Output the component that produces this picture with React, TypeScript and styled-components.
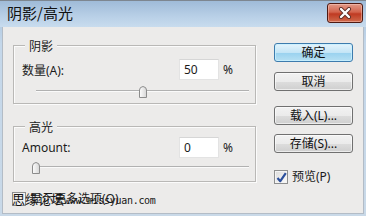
import styled, { createGlobalStyle } from "styled-components";

const GlobalStyle = createGlobalStyle`
  html, body {
    margin: 0;
    padding: 0;
    width: 366px;
    height: 216px;
    overflow: hidden;
    background: #ecebea;
  }
  * {
    box-sizing: border-box;
  }
`;

const FONT = `"Noto Sans", "Noto Sans CJK SC", sans-serif`;

const Window = styled.div`
  width: 366px;
  height: 216px;
  display: flex;
  flex-direction: column;
  background: linear-gradient(#a3bfdb, #c4d7ea 20%, #c9d9e8);
  border-top: 1px solid #7d8690;
  font-family: ${FONT};
  color: #1b1b1b;
`;

const TitleBar = styled.div`
  height: 26px;
  flex: none;
  display: flex;
  align-items: center;
  justify-content: space-between;
  padding: 0 3px 0 7px;
  background: linear-gradient(#9fbbd8, #b9d0e7 60%, #c8dcee);
`;

const Title = styled.span`
  font-size: 15px;
  line-height: 18px;
  font-family: "Noto Sans CJK SC", sans-serif;
  color: #111;
  margin-top: -2px;
`;

const CloseButton = styled.div`
  width: 36px;
  height: 20px;
  margin-top: -3px;
  border: 1px solid #4e1a12;
  border-radius: 3px;
  background: linear-gradient(#e19a88, #d3644d 45%, #bf3a22 55%, #cf6a4c);
  display: flex;
  align-items: center;
  justify-content: center;
  box-shadow: inset 0 0 0 1px rgba(255, 210, 200, 0.45);
`;

const Body = styled.div`
  flex: 1;
  display: flex;
  margin: 0 2px 2px 2px;
  background: #ecebea;
  border-left: 1px solid #b3bcc6;
  border-right: 1px solid #b3bcc6;
  border-bottom: 1px solid #b3bcc6;
  padding: 0 0 0 10px;
  position: relative;
`;

const LeftColumn = styled.div`
  width: 243px;
  display: flex;
  flex-direction: column;
`;

const RightColumn = styled.div`
  margin-left: 18px;
  width: 79px;
  display: flex;
  flex-direction: column;
  padding-top: 16px;
`;

const Group = styled.div<{ $top: number; $height: number; $pad: number }>`
  position: relative;
  margin-top: ${(p) => p.$top}px;
  height: ${(p) => p.$height}px;
  border: 1px solid #b9b8b6;
  box-shadow: inset 1px 1px 0 #fbfbfb, 1px 1px 0 #fbfbfb;
  padding: ${(p) => p.$pad}px 4px 0 8px;
`;

const Legend = styled.span`
  position: absolute;
  top: -9px;
  left: 11px;
  padding: 0 4px;
  background: #ecebea;
  font-size: 12px;
  line-height: 17px;
  font-family: "Noto Sans CJK SC", sans-serif;
`;

const Row = styled.div`
  display: grid;
  grid-template-columns: 1fr 40px 32px;
  align-items: center;
  height: 21px;
  font-size: 12px;
`;

const Label = styled.span`
  font-family: ${FONT};
`;

const NumberBox = styled.div`
  height: 21px;
  background: #fff;
  border: 1px solid #e3e3e3;
  border-top-color: #d6d6d6;
  padding-left: 4px;
  line-height: 19px;
  font-size: 12px;
`;

const Unit = styled.span`
  padding-left: 4px;
`;

const Slider = styled.div<{ $gap: number }>`
  position: relative;
  margin: ${(p) => p.$gap}px 0 0 14px;
  width: 213px;
  height: 12px;
`;

const Track = styled.div`
  position: absolute;
  left: 0;
  right: 0;
  top: 4px;
  height: 2px;
  border-top: 1px solid #b1b1b1;
  border-bottom: 1px solid #fafafa;
`;

const Thumb = styled.svg`
  position: absolute;
  top: 0;
  width: 8px;
  height: 12px;
  margin-left: -4px;
`;

const Button = styled.div<{ $primary?: boolean; $gap: number }>`
  margin-top: ${(p) => p.$gap}px;
  height: 19px;
  border: 1px solid ${(p) => (p.$primary ? "#3d7bad" : "#707070")};
  border-radius: 3px;
  background: ${(p) =>
    p.$primary
      ? "linear-gradient(#e5f4fc, #c4e5f6 50%, #98d1ef 51%, #b6e0f3)"
      : "linear-gradient(#f2f2f2, #ebebeb 50%, #dddddd 51%, #cfcfcf)"};
  box-shadow: inset 0 0 0 1px ${(p) => (p.$primary ? "rgba(200,240,255,0.8)" : "rgba(255,255,255,0.6)")};
  display: flex;
  align-items: center;
  justify-content: center;
  font-size: 12px;
  line-height: 17px;
  color: #111;
`;

const CheckRow = styled.div<{ $gap: number }>`
  margin-top: ${(p) => p.$gap}px;
  display: flex;
  align-items: center;
  gap: 4px;
  font-size: 12px;
  line-height: 14px;
`;

const CheckBox = styled.div`
  width: 14px;
  height: 14px;
  flex: none;
  border: 1px solid #8e8f8f;
  background: linear-gradient(135deg, #dcdcdc, #fbfbfb);
  box-shadow: inset 0 0 0 1px #f4f4f4;
  display: flex;
  align-items: center;
  justify-content: center;
`;

const BottomRow = styled(CheckRow)`
  position: relative;
  margin-left: -1px;
`;

const Watermark = styled.span`
  position: absolute;
  left: 0;
  top: -1px;
  white-space: nowrap;
  font-size: 13px;
  line-height: 16px;
  color: #161616;
  font-family: "Noto Sans CJK SC", sans-serif;
  span {
    font-family: "DejaVu Sans Mono", monospace;
    font-size: 10px;
    letter-spacing: -0.3px;
  }
`;

function SliderThumb({ value }: { value: number }) {
  return (
    <Thumb viewBox="0 0 8 12" style={{ left: `${value}%` }}>
      <defs>
        <linearGradient id="tg" x1="0" y1="0" x2="1" y2="0">
          <stop offset="0" stopColor="#fdfdfd" />
          <stop offset="1" stopColor="#d6d6d6" />
        </linearGradient>
      </defs>
      <path
        d="M0.5 4 Q0.5 1 4 0.5 Q7.5 1 7.5 4 V11.5 H0.5 Z"
        fill="url(#tg)"
        stroke="#8c8c8c"
      />
    </Thumb>
  );
}

function Check() {
  return (
    <svg width="11" height="11" viewBox="0 0 11 11">
      <path
        d="M1.5 6 L4.3 9.2 L9.8 1.2"
        fill="none"
        stroke="#2b4f9c"
        strokeWidth="2.2"
        strokeLinejoin="round"
      />
    </svg>
  );
}

export default function App() {
  return (
    <>
      <GlobalStyle />
      <Window>
        <TitleBar>
          <Title>阴影/高光</Title>
          <CloseButton>
            <svg width="14" height="12" viewBox="0 0 14 12">
              <path
                d="M3 2 L11 10 M11 2 L3 10"
                stroke="#5a2a22"
                strokeWidth="4"
                strokeLinecap="round"
              />
              <path
                d="M3 2 L11 10 M11 2 L3 10"
                stroke="#ffffff"
                strokeWidth="2.4"
                strokeLinecap="round"
              />
            </svg>
          </CloseButton>
        </TitleBar>
        <Body>
          <LeftColumn>
            <Group $top={18} $height={59} $pad={13}>
              <Legend>阴影</Legend>
              <Row>
                <Label>数量(A):</Label>
                <NumberBox>50</NumberBox>
                <Unit>%</Unit>
              </Row>
              <Slider $gap={6}>
                <Track />
                <SliderThumb value={50} />
              </Slider>
            </Group>
            <Group $top={22} $height={56} $pad={10}>
              <Legend>高光</Legend>
              <Row>
                <Label>Amount:</Label>
                <NumberBox>0</NumberBox>
                <Unit>%</Unit>
              </Row>
              <Slider $gap={4}>
                <Track />
                <SliderThumb value={0} />
              </Slider>
            </Group>
            <BottomRow $gap={10}>
              <CheckBox />
              <span>显示更多选项(O)</span>
              <Watermark>
                思缘论坛<span>www.missyuan.com</span>
              </Watermark>
            </BottomRow>
          </LeftColumn>
          <RightColumn>
            <Button $primary $gap={0}>确定</Button>
            <Button $gap={10}>取消</Button>
            <Button $gap={15}>载入(L)...</Button>
            <Button $gap={9}>存储(S)...</Button>
            <CheckRow $gap={17}>
              <CheckBox>
                <Check />
              </CheckBox>
              <span>预览(P)</span>
            </CheckRow>
          </RightColumn>
        </Body>
      </Window>
    </>
  );
}
